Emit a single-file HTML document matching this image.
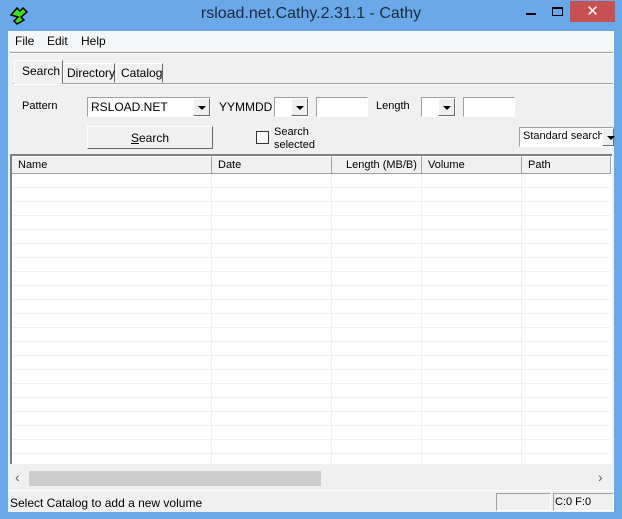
<!DOCTYPE html><html><head><style>
*{margin:0;padding:0;box-sizing:border-box}
body{width:622px;height:519px;background:#6ba8ea;font-family:"Liberation Sans",sans-serif;font-size:11px;color:#000;position:relative;overflow:hidden;white-space:nowrap}
.a{position:absolute}
.title{left:0;width:622px;text-align:center;top:5px;font-size:16px;color:#1a2b3c}
.menu{left:8px;top:31px;width:606px;height:20px;background:#f5f6f7;font-size:12px}
.menu span{position:absolute;top:3px}
.client{left:8px;top:51px;width:606px;height:461px;background:#f0f0f0}
.sunk{border-top:1px solid #a0a0a0;border-left:1px solid #a0a0a0;border-bottom:1px solid #fff;border-right:1px solid #fff;background:#fff}
.btn{background:#f0f0f0;border:1px solid;border-color:#fff #696969 #696969 #fff;text-align:center}
.dd{background:#f0f0f0;border:1px solid;border-color:#fff #696969 #696969 #fff;width:17px;height:18px}
.dd:after{content:"";position:absolute;left:4px;top:7px;border-left:4px solid transparent;border-right:4px solid transparent;border-top:4px solid #000}
.hdr{top:156px;height:18px;background:#f0f0f0;border-right:1px solid #a0a0a0;border-bottom:1px solid #a0a0a0;border-top:1px solid #fff;padding:2px 0 0 6px}
</style></head><body>
<svg class="a" style="left:9px;top:5px" width="20" height="20" viewBox="0 0 20 20"><path d="M2 10 L8 3 L11 6 L14 3 L18 7 L12 12 L15 15 L8 19 L5 16 L9 12 Z" fill="#36e01c" stroke="#000" stroke-width="1.5"/></svg>
<div class="a title">rsload.net.Cathy.2.31.1 - Cathy</div>
<div class="a" style="width:10px;height:2px;background:#000;left:526px;top:13px"></div>
<div class="a" style="left:552px;top:7px;width:11px;height:9px;border:1px solid #000;border-top-width:2px"></div>
<div class="a" style="left:570px;top:1px;width:45px;height:21px;background:#c75050;color:#fff;text-align:center;font-size:15px;line-height:21px">✕</div>
<div class="a menu"><span style="left:7px">File</span><span style="left:39px">Edit</span><span style="left:73px">Help</span></div>
<div class="a client"></div>
<div class="a" style="left:10px;top:52px;width:603px;height:2px;border-top:1px solid #a0a0a0;border-bottom:1px solid #fff"></div>
<div class="a" style="left:13px;top:83px;width:600px;height:2px;border-top:1px solid #a0a0a0;border-bottom:1px solid #fff"></div>
<div class="a" style="left:14px;top:60px;width:49px;height:24px;background:#f0f0f0;border:1px solid;border-color:#fff #696969 #f0f0f0 #fff;padding:3px 0 0 7px;font-size:12px">Search</div>
<div class="a" style="left:63px;top:63px;width:52px;height:20px;border:1px solid;border-color:#fff #696969 transparent #fff;padding:2px 0 0 3px;font-size:12px">Directory</div>
<div class="a" style="left:116px;top:63px;width:47px;height:20px;border:1px solid;border-color:#fff #696969 transparent #fff;padding:2px 0 0 4px;font-size:12px">Catalog</div>
<div class="a" style="left:22px;top:100px">Pattern</div>
<div class="a sunk" style="left:87px;top:97px;width:124px;height:20px;padding:2px 0 0 3px;font-size:12px">RSLOAD.NET</div>
<div class="a dd" style="left:193px;top:98px"></div>
<div class="a" style="left:219px;top:100px;font-size:12px">YYMMDD</div>
<div class="a sunk" style="left:274px;top:97px;width:35px;height:20px"></div>
<div class="a dd" style="left:291px;top:98px"></div>
<div class="a sunk" style="left:316px;top:97px;width:52px;height:20px"></div>
<div class="a" style="left:376px;top:100px">Length</div>
<div class="a sunk" style="left:421px;top:97px;width:35px;height:20px"></div>
<div class="a dd" style="left:438px;top:98px"></div>
<div class="a sunk" style="left:463px;top:97px;width:52px;height:20px"></div>
<div class="a btn" style="left:87px;top:126px;width:126px;height:23px;padding-top:4px;font-size:12px"><u>S</u>earch</div>
<div class="a sunk" style="left:256px;top:131px;width:13px;height:13px;border-color:#333"></div>
<div class="a" style="left:274px;top:126px;line-height:13px">Search<br>selected</div>
<div class="a sunk" style="left:519px;top:127px;width:95px;height:20px;padding:2px 0 0 3px;overflow:hidden">Standard search</div>
<div class="a dd" style="left:602px;top:128px;width:12px"></div>
<div class="a" style="left:10px;top:154px;width:602px;height:310px;background:#fff;border-left:2px solid #808080;border-top:2px solid #808080"></div>
<div class="a" style="left:12px;top:174px;width:598px;height:290px;background:repeating-linear-gradient(#fff 0 13px,#f0f0f0 13px 14px)"></div>
<div class="a" style="left:211px;top:174px;width:1px;height:290px;background:#f0f0f0"></div>
<div class="a" style="left:331px;top:174px;width:1px;height:290px;background:#f0f0f0"></div>
<div class="a" style="left:421px;top:174px;width:1px;height:290px;background:#f0f0f0"></div>
<div class="a" style="left:521px;top:174px;width:1px;height:290px;background:#f0f0f0"></div>
<div class="a hdr" style="left:12px;width:200px">Name</div>
<div class="a hdr" style="left:212px;width:120px">Date</div>
<div class="a hdr" style="left:332px;width:90px;padding-left:14px">Length (MB/B)</div>
<div class="a hdr" style="left:422px;width:100px">Volume</div>
<div class="a hdr" style="left:522px;width:89px">Path</div>
<div class="a" style="left:12px;top:469px;width:598px;height:18px;background:#f0f0f0"></div>
<div class="a" style="left:29px;top:471px;width:292px;height:15px;background:#cdcdcd"></div>
<div class="a" style="left:15px;top:469px;color:#606060;font-size:14px">‹</div>
<div class="a" style="left:598px;top:469px;color:#606060;font-size:14px">›</div>
<div class="a" style="left:8px;top:490px;width:606px;height:1px;background:#fff"></div>
<div class="a" style="left:10px;top:496px;font-size:12px">Select Catalog to add a new volume</div>
<div class="a" style="left:496px;top:493px;width:55px;height:18px;border:1px solid;border-color:#a0a0a0 #fff #fff #a0a0a0"></div>
<div class="a" style="left:553px;top:493px;width:61px;height:18px;border:1px solid;border-color:#a0a0a0 #fff #fff #a0a0a0;padding:2px 0 0 1px">C:0 F:0</div>
</body></html>
